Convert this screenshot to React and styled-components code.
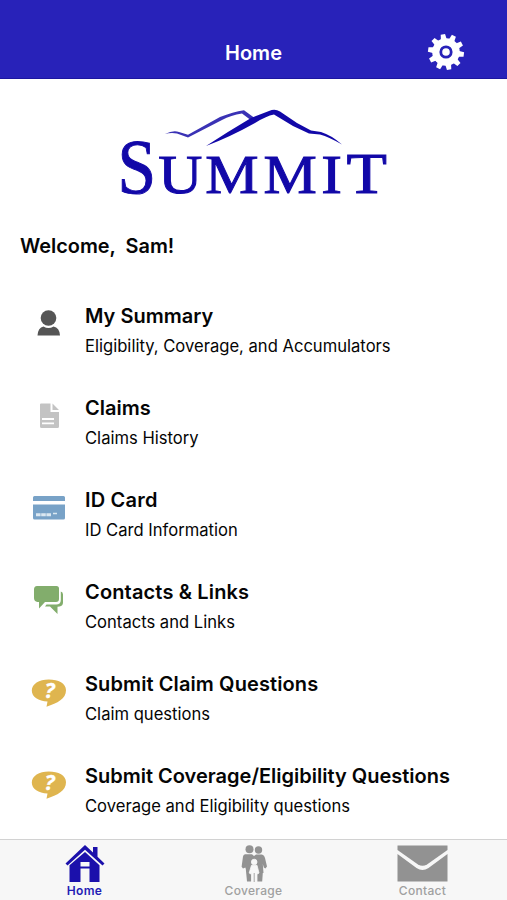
import React from 'react';
import styled, { createGlobalStyle } from 'styled-components';

const GlobalStyle = createGlobalStyle`
  * {
    box-sizing: border-box;
  }

  body {
    margin: 0;
    background: #fff;
    font-family: Inter, "Liberation Sans", sans-serif;
    color: #050505;
  }
`;

const Screen = styled.div`
  display: flex;
  flex-direction: column;
  height: 900px;
  overflow: hidden;
`;

const Header = styled.header`
  display: grid;
  grid-template-columns: 1fr auto 1fr;
  align-items: center;
  flex: none;
  height: 79px;
  padding: 26px 42px 0;
  background: #2822b9;
  border-bottom: 1px solid #1c169f;
`;

const HeaderTitle = styled.h1`
  grid-column: 2;
  margin: 1px 0 0;
  font-size: 20px;
  font-weight: 600;
  line-height: 24px;
  color: #fff;
`;

const SettingsButton = styled.button`
  display: flex;
  justify-self: end;
  padding: 0;
  border: 0;
  background: none;
`;

const Content = styled.main`
  flex: 1;
  min-height: 0;
  overflow: hidden;
`;

const LogoBox = styled.div`
  display: flex;
  justify-content: center;
  padding-top: 21px;
`;

const Welcome = styled.h2`
  margin: 15px 0 0 20px;
  font-size: 19.9px;
  font-weight: 600;
  line-height: 26px;
  white-space: pre;
`;

const Menu = styled.ul`
  margin: 24px 0 0;
  padding: 0;
  list-style: none;
`;

const MenuItem = styled.li`
  display: grid;
  grid-template-columns: 85px 1fr;
  height: 92px;
`;

const MenuIcon = styled.div`
  padding: 17px 0 0 24px;

  svg {
    display: block;
  }
`;

const MenuText = styled.div`
  padding-top: 20px;
  white-space: nowrap;
`;

const MenuTitle = styled.div`
  width: max-content;
  font-size: 20px;
  font-weight: 600;
  line-height: 26px;
  letter-spacing: ${props => props.$spacing || 0}px;
`;

const MenuSubtitle = styled.div`
  width: max-content;
  margin-top: 5px;
  font-size: 16.6px;
  line-height: 24px;
`;

const TabBar = styled.nav`
  display: grid;
  grid-template-columns: repeat(3, 1fr);
  flex: none;
  height: 61px;
  background: #f7f7f7;
  border-top: 1px solid #d2d2d2;
`;

const Tab = styled.a`
  display: flex;
  flex-direction: column;
  align-items: center;
  padding-top: 5px;
  font-size: 12px;
  font-weight: ${props => (props.$active ? 600 : 500)};
  line-height: 15px;
  letter-spacing: 0.3px;
  color: ${props => (props.$active ? '#241cb5' : '#a0a0a0')};
`;

const Gear = () => (
  <svg width="38" height="38" viewBox="-19 -19 38 38" fill="#fff">
    <circle r="13.8" />
    {[...Array(10)].map((_, i) => (
      <path key={i} d="M-3-12-2.2-18H2.2L3-12Z" transform={`rotate(${i * 36 - 10})`} />
    ))}
    <circle r="5.2" fill="none" stroke="#2822b9" strokeWidth="2.8" />
  </svg>
);

const Logo = () => (
  <svg width="280" height="118" viewBox="114 100 280 118" fill="#1208a8">
    <path
      fill="#3a32b5"
      d="M165 134Q173 130 179 132L188 134.8 220 117Q233 112 244 110.2L256 119 252 121 242 113.5Q231 115 222 120L188 137.5 177 133.5Q171 132.3 165 134Z"
    />
    <path d="M206 146Q229 131 251 118L269 111Q275 108.5 280 111.5L297 123 311 130.5 321 132Q331 135 342 144.5 329 137 320 134.5L309 133.5 293 126 274 114.5Q266 116 255 123 230 137 206 146Z" />
    <g fontFamily="'Liberation Serif', serif" stroke="#1208a8" strokeWidth="1">
      <text transform="translate(117.6 193) scale(.89 1)" fontSize="78">S</text>
      <text transform="translate(158.2 193) scale(1.11 1)" fontSize="55">U</text>
      <text transform="translate(205.3 193) scale(1.09 1)" fontSize="55">M</text>
      <text transform="translate(263.6 193) scale(1.09 1)" fontSize="55">M</text>
      <text transform="translate(321.3 193) scale(1.13 1)" fontSize="55">I</text>
      <text transform="translate(346.6 193) scale(1.16 1)" fontSize="57">T</text>
    </g>
  </svg>
);

const IconFrame = ({ children }) => (
  <svg width="50" height="50" viewBox="0 0 50 50">{children}</svg>
);

const PersonIcon = () => (
  <IconFrame>
    <g fill="#555">
      <circle cx="24.5" cy="18" r="7.8" />
      <path d="M13.5 35.5Q14 27.5 19.5 26.5 24.5 29.5 29.5 26.5 35.5 27.5 36 35.5Z" />
    </g>
  </IconFrame>
);

const DocumentIcon = () => (
  <IconFrame>
    <path fill="#c3c3c3" d="M17 11.5H26.5V20H35V34.5Q35 36 33.5 36H17.5Q16 36 16 34.5V12.5Q16 11.5 17 11.5ZM28.5 11.5 35 18H28.5Z" />
    <path stroke="#fff" strokeWidth="1.8" d="M18 27H30M18 31.3H30" />
  </IconFrame>
);

const CardIcon = () => (
  <IconFrame>
    <path fill="#78a2c7" d="M10.5 12H39.5Q41 12 41 13.5V17H9V13.5Q9 12 10.5 12ZM9 20.5H41V34Q41 35.5 39.5 35.5H10.5Q9 35.5 9 34Z" />
    <path stroke="#dbe8f1" strokeWidth="3" strokeDasharray="4.6 .6" d="M12 30.8H27.5" />
    <path stroke="#dbe8f1" strokeWidth="1.5" d="M29 29.5H33" />
  </IconFrame>
);

const ChatIcon = () => (
  <IconFrame>
    <path fill="#82ad6c" d="M13 10H32.5Q35 10 35 12.5V23Q35 26 32 26H21L15 32.5V26H13.5Q10 25.5 10 22V13.5Q10 10 13 10Z" />
    <path fill="#82ad6c" d="M36.8 15.5Q39 16 39 18.5V26.5Q39 30 35.5 30.5L33.5 30.7V38L26 30.5H21L22.5 28.5H32Q36.8 28.5 36.8 24Z" />
  </IconFrame>
);

const QuestionIcon = () => (
  <IconFrame>
    <path fill="#dfb54f" d="M24.8 11.5C34.5 11.5 42 15.5 42 22.2 42 31 33.5 34.8 22.5 38.7L23.5 33.5C14.5 33 7.8 29 7.8 22.5 7.8 16 15 11.5 24.8 11.5Z" />
    <text x="25.5" y="30" textAnchor="middle" fill="#fff" stroke="#fff" strokeWidth=".3" fontFamily="Open Sans, sans-serif" fontSize="22" fontWeight="700" fontStyle="italic">?</text>
  </IconFrame>
);

const HomeIcon = () => (
  <svg width="40" height="38" viewBox="0 0 40 38" fill="#1b10ab">
    <path d="M20 0 28 7.5V2H32.5V11.8L39.5 18.5 37.5 20.5 20 4.8 2.5 20.5.5 18.5Z" />
    <path fillRule="evenodd" d="M20 7 34.5 20.2V37H4.5V20.2ZM15.5 17V21.5H24.5V17ZM15.5 23.5V37H24.5V23.5Z" />
  </svg>
);

const FamilyIcon = () => (
  <svg width="30" height="38" viewBox="0 0 30 38" fill="#929292">
    <circle cx="10.5" cy="4.2" r="4" />
    <circle cx="19.5" cy="5" r="3.7" />
    <path d="M6 9.2H13L15 11 17 9.5H23Q25.5 10 26 13L28 21.5 26.4 23.5 24.8 22.5 23.8 19 24.5 28H23.8L23.2 36.5H8L6.8 24 6.3 22.5 4 23.5 2.6 21.8 4 11.5Q4.4 9.6 6 9.2Z" />
    <g stroke="#f7f7f7" strokeWidth=".8">
      <circle cx="15.2" cy="17" r="2.8" fill="#f7f7f7" />
      <path fill="#f7f7f7" d="M12.5 20.3H18L20 28 18.5 29 18 27.5V37H12.5V27.5L11.7 29 10.2 28Z" />
    </g>
    <path stroke="#929292" strokeWidth=".8" d="M15.2 28V37" />
  </svg>
);

const MailIcon = () => (
  <svg width="51" height="38" viewBox="0 0 51 38" fill="#929292">
    <path d="M.5 .5H50.5V5L30 19.5Q25.5 22 21 19.5L.5 5Z" />
    <path d="M.5 9 19.5 23Q25.5 27 31.5 23L50.5 9V36.5H.5Z" />
  </svg>
);

const items = [
  { title: 'My Summary', text: 'Eligibility, Coverage, and Accumulators', Icon: PersonIcon },
  { title: 'Claims', text: 'Claims History', Icon: DocumentIcon },
  { title: 'ID Card', text: 'ID Card Information', Icon: CardIcon, spacing: 0.2 },
  { title: 'Contacts & Links', text: 'Contacts and Links', Icon: ChatIcon, spacing: 0.15 },
  { title: 'Submit Claim Questions', text: 'Claim questions', Icon: QuestionIcon, spacing: 0.1 },
  { title: 'Submit Coverage/Eligibility Questions', text: 'Coverage and Eligibility questions', Icon: QuestionIcon },
];

const App = () => (
  <Screen>
    <GlobalStyle />
    <Header>
      <HeaderTitle>Home</HeaderTitle>
      <SettingsButton aria-label="Settings">
        <Gear />
      </SettingsButton>
    </Header>

    <Content>
      <LogoBox>
        <Logo />
      </LogoBox>
      <Welcome>Welcome,  Sam!</Welcome>
      <Menu>
        {items.map(({ title, text, Icon, spacing }) => (
          <MenuItem key={title}>
            <MenuIcon>
              <Icon />
            </MenuIcon>
            <MenuText>
              <MenuTitle $spacing={spacing}>{title}</MenuTitle>
              <MenuSubtitle>{text}</MenuSubtitle>
            </MenuText>
          </MenuItem>
        ))}
      </Menu>
    </Content>

    <TabBar>
      <Tab $active>
        <HomeIcon />
        Home
      </Tab>
      <Tab>
        <FamilyIcon />
        Coverage
      </Tab>
      <Tab>
        <MailIcon />
        Contact
      </Tab>
    </TabBar>
  </Screen>
);

export default App;
